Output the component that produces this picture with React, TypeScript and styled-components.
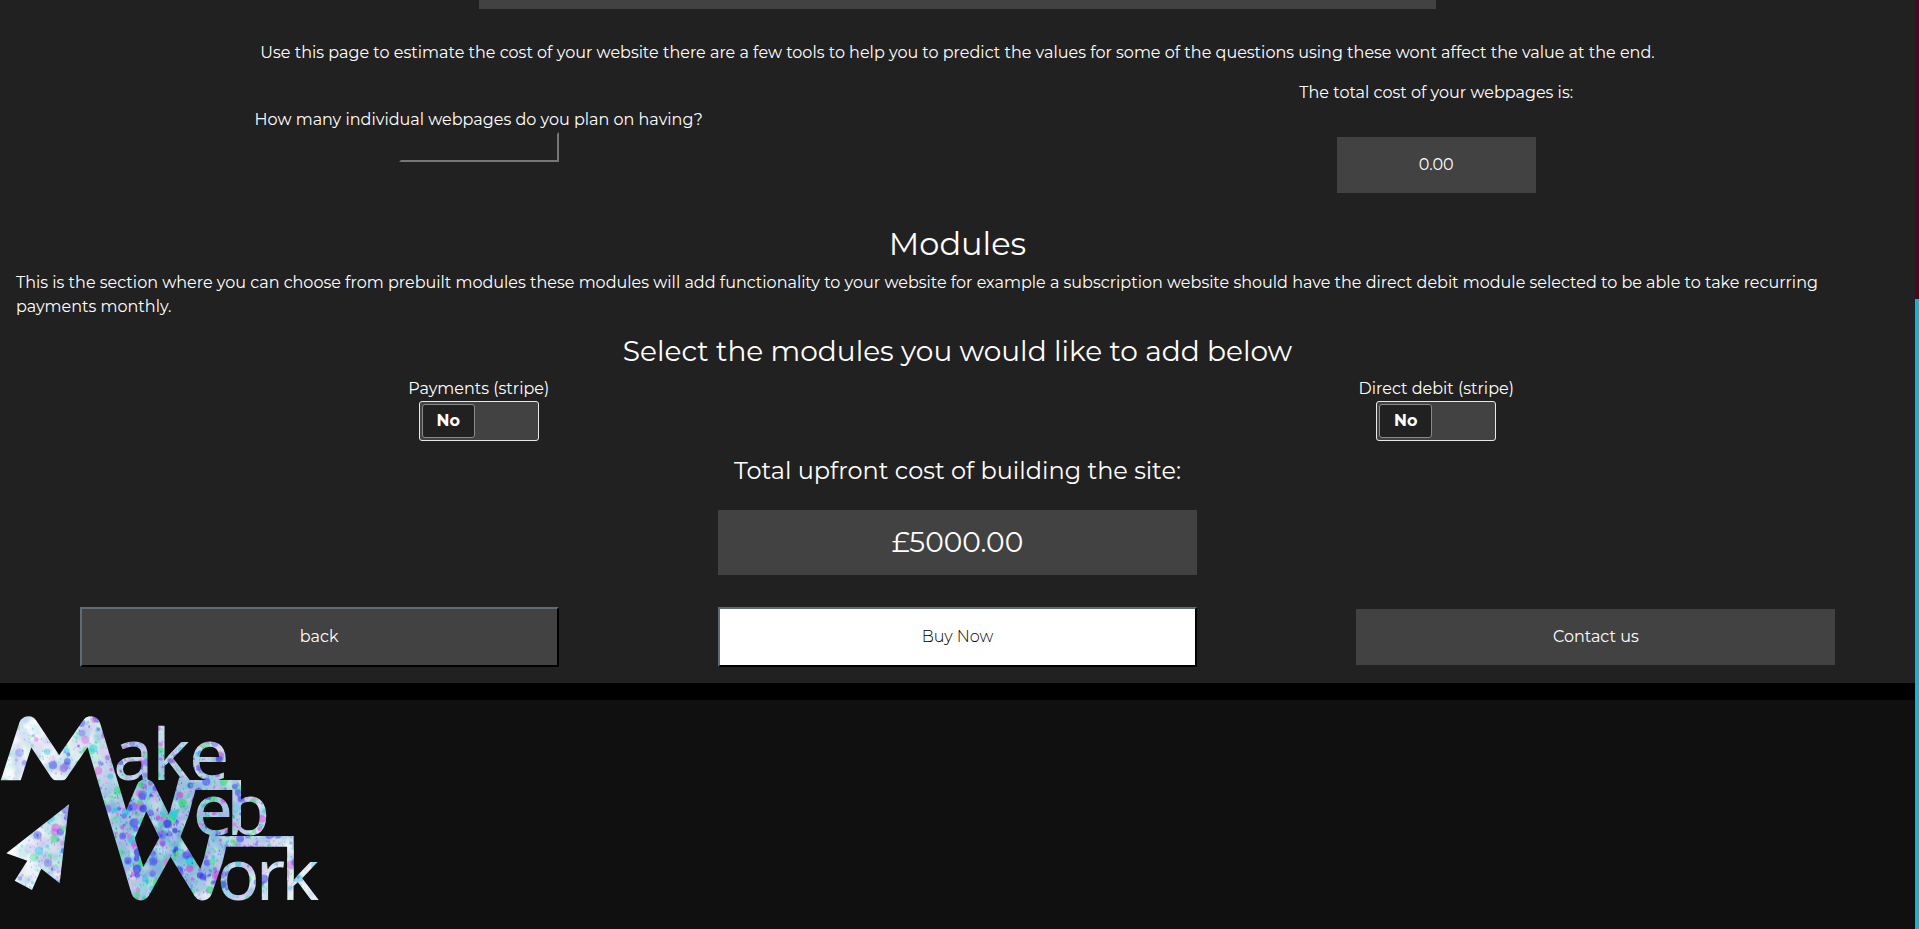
import React from 'react';
import styled, { createGlobalStyle } from 'styled-components';

const GlobalStyle = createGlobalStyle`
  * { box-sizing: border-box; }
  html, body { margin: 0; height: 100%; overflow: hidden; background: #101010; }
  body {
    font-family: Montserrat, Inter, "Liberation Sans", sans-serif;
    font-size: 16px;
    line-height: 24px;
    color: #fff;
  }
  button, input { font: inherit; color: inherit; }
`;

const Page = styled.div`
  display: flex;
  width: 100vw;
  height: 100vh;
`;

const Content = styled.div`
  flex: 1;
  min-width: 0;
  display: flex;
  flex-direction: column;
`;

const ScrollTrack = styled.div`
  width: 4px;
  background: #00bcd4;
`;

const ScrollThumb = styled.div`
  height: 299px;
  background: #470622;
`;

const Estimator = styled.main`
  height: 683px;
  background: #212121;
  display: flex;
  flex-direction: column;
  align-items: center;
`;

const TitleBar = styled.div`
  width: 50%;
  height: 9px;
  background: #424242;
`;

const Text = styled.p`
  margin: 0;
`;

const Intro = styled(Text)`
  margin-top: 32px;
`;

const Split = styled.section`
  width: 100%;
  height: 143.6px;
  margin-top: 16px;
  display: grid;
  grid-template-columns: 1fr 1fr;
`;

const Cell = styled.div<{ $top?: number }>`
  display: flex;
  flex-direction: column;
  align-items: center;
  padding-top: ${p => p.$top ?? 0}px;
`;

const PageCount = styled.input`
  width: 160px;
  height: 30px;
  border: 2px solid;
  border-color: #212121 #767676 #767676 #212121;
  background: transparent;
  outline: none;
`;

const PageCost = styled.div`
  width: 199px;
  height: 56px;
  margin-top: 32px;
  background: #424242;
  display: flex;
  align-items: center;
  justify-content: center;
`;

const Heading = styled.h2<{ $size: number }>`
  margin: 0;
  font-size: ${p => p.$size}px;
  font-weight: 400;
  line-height: 1.2;
`;

const Description = styled(Text)`
  width: 100%;
  padding: 0 16px;
  margin: 8px 0 16px;
`;

const Modules = styled.section`
  width: 100%;
  height: 72px;
  margin: 8px 0;
  display: grid;
  grid-template-columns: 1fr 1fr;
`;

const Toggle = styled.button`
  width: 120px;
  height: 40px;
  padding: 2px;
  border: 1px solid #e8e8e8;
  border-radius: 3px;
  background: #424242;
  display: flex;
`;

const Knob = styled.span`
  width: 53px;
  height: 34px;
  border: 1px solid #8a8a8a;
  border-radius: 3px;
  background: #212121;
  font-weight: 700;
  line-height: 32px;
  text-align: center;
`;

const Total = styled.div`
  width: 25%;
  height: 65px;
  margin: 24.6px 0 32px;
  background: #424242;
  display: flex;
  align-items: center;
  justify-content: center;
  font-size: 28px;
`;

const Actions = styled.nav`
  width: 100%;
  display: grid;
  grid-template-columns: repeat(3, 1fr);
  justify-items: center;
  align-items: center;
`;

const Action = styled.button<{ $kind: 'raised' | 'primary' | 'flat' }>`
  width: 75%;
  height: ${p => (p.$kind === 'flat' ? 56 : 60)}px;
  padding: 0;
  border-style: solid;
  border-width: ${p => (p.$kind === 'flat' ? 0 : 2)}px;
  border-color: #5f6b75 #000 #000 #5f6b75;
  background: ${p => (p.$kind === 'primary' ? '#fff' : '#424242')};
  color: ${p => (p.$kind === 'primary' ? '#000' : '#fff')};
  font-weight: ${p => (p.$kind === 'primary' ? 300 : 400)};
  text-align: center;
`;

const Footer = styled.footer`
  flex: 1;
  border-top: 17px solid #000;
  background: #101010;
`;

const LogoSvg = styled.svg`
  display: block;
  width: 340px;
  height: 228px;
`;

type Dot = { x: number; y: number; r: number; c: string; o: number };

function scatter(): { clouds: Dot[]; dots: Dot[] } {
  let seed = 7331;
  const next = () => {
    seed = (seed * 1664525 + 1013904223) % 4294967296;
    return seed / 4294967296;
  };
  const hues = ['#2fe070', '#4a50f0', '#d04ae0', '#22cdea', '#6f6bea', '#48e08c', '#3038e8', '#e070e0'];
  const tints = ['#f4faf8', '#b9a8ec', '#7fd4e4', '#b9f2d0', '#dcbcee', '#6ca8dc'];
  const clouds: Dot[] = [];
  const dots: Dot[] = [];
  for (let i = 0; i < 1300; i += 1) {
    clouds.push({ x: next() * 1000, y: 90 + next() * 590, r: 6 + next() * 14, c: tints[Math.floor(next() * 6)], o: 0.5 });
  }
  for (let i = 0; i < 6200; i += 1) {
    const x = next() * 1000;
    const y = 90 + next() * 590;
    const size = next();
    const distance = Math.hypot((x - 500) / 330, (y - 450) / 300);
    const density = Math.max(0.26, 1.2 - distance * 0.55);
    const c = hues[Math.floor(next() * hues.length)];
    if (next() < density) {
      dots.push({ x, y, r: 2 + size ** 8 * 12, c, o: Math.min(0.75, 0.2 + density * 0.5) });
    }
  }
  return { clouds, dots };
}

const { clouds, dots } = scatter();

function Logo() {
  return (
    <LogoSvg viewBox="0 60 1020 684" role="img" aria-label="Make Web Work">
      <defs>
        <radialGradient id="base" gradientUnits="userSpaceOnUse" cx="500" cy="460" r="480">
          <stop offset="0" stopColor="#50b4c4" />
          <stop offset="0.45" stopColor="#b0c8e4" />
          <stop offset="1" stopColor="#f2f6fa" />
        </radialGradient>
        <radialGradient id="haze" gradientUnits="userSpaceOnUse" cx="500" cy="460" r="500">
          <stop offset="0" stopColor="#fff" stopOpacity="0" />
          <stop offset="0.45" stopColor="#fff" stopOpacity="0.04" />
          <stop offset="1" stopColor="#fff" stopOpacity="0.45" />
        </radialGradient>
        <filter id="soften" x="0" y="0" width="1" height="1">
          <feGaussianBlur stdDeviation="4" />
        </filter>
        <pattern id="paint" patternUnits="userSpaceOnUse" width="1020" height="760">
          <rect width="1020" height="760" fill="url(#base)" />
          <g filter="url(#soften)">
            {clouds.map((d, i) => (
              <circle key={i} cx={d.x} cy={d.y} r={d.r} fill={d.c} opacity={d.o} />
            ))}
          </g>
          <rect width="1020" height="760" fill="url(#haze)" />
          {dots.map((d, i) => (
            <circle key={i} cx={d.x} cy={d.y} r={d.r} fill={d.c} opacity={d.o} />
          ))}
        </pattern>
        <clipPath id="trim">
          <path d="M0 60H345V301H0ZM260 60H1020V301H260ZM260 300H1020V744H260Z" />
        </clipPath>
      </defs>
      <g fill="none" stroke="url(#paint)" strokeWidth="57" strokeLinejoin="round" clipPath="url(#trim)">
        <path d="M18 345L85 137L177 276L273 137L422 633L508 478L538 400L565 300" />
        <path d="M372 478L437 326L508 470L608 633L640 540L657 469" />
      </g>
      <g fill="url(#paint)">
        <path d="M538 300H723V440H705V330H535Z" />
        <path d="M632 468H881V600H862V500H628Z" />
        <path d="M207 373L179 610L124 566L96 630L44 602L82 542L19 520Z" />
      </g>
      <g fill="url(#paint)" fontFamily="'Noto Sans', 'Open Sans', sans-serif" fontSize="214">
        <text x="340" y="299" textLength="348" lengthAdjust="spacing">ake</text>
        <text x="578" y="465" textLength="232" lengthAdjust="spacing">eb</text>
        <text x="650" y="660" textLength="308" lengthAdjust="spacing">ork</text>
      </g>
    </LogoSvg>
  );
}

export default function App() {
  return (
    <>
      <GlobalStyle />
      <Page>
        <Content>
          <Estimator>
            <TitleBar />
            <Intro>
              Use this page to estimate the cost of your website there are a few tools to help you to predict the values
              for some of the questions using these wont affect the value at the end.
            </Intro>
            <Split>
              <Cell $top={27}>
                <Text>How many individual webpages do you plan on having?</Text>
                <PageCount aria-label="Number of webpages" />
              </Cell>
              <Cell>
                <Text>The total cost of your webpages is:</Text>
                <PageCost>0.00</PageCost>
              </Cell>
            </Split>
            <Heading $size={32}>Modules</Heading>
            <Description>
              This is the section where you can choose from prebuilt modules these modules will add functionality to
              your website for example a subscription website should have the direct debit module selected to be able
              to take recurring payments monthly.
            </Description>
            <Heading $size={28}>Select the modules you would like to add below</Heading>
            <Modules>
              <Cell>
                <Text>Payments (stripe)</Text>
                <Toggle><Knob>No</Knob></Toggle>
              </Cell>
              <Cell>
                <Text>Direct debit (stripe)</Text>
                <Toggle><Knob>No</Knob></Toggle>
              </Cell>
            </Modules>
            <Heading as="h4" $size={24}>Total upfront cost of building the site:</Heading>
            <Total>£5000.00</Total>
            <Actions>
              <Action $kind="raised">back</Action>
              <Action $kind="primary">Buy Now</Action>
              <Action $kind="flat">Contact us</Action>
            </Actions>
          </Estimator>
          <Footer>
            <Logo />
          </Footer>
        </Content>
        <ScrollTrack>
          <ScrollThumb />
        </ScrollTrack>
      </Page>
    </>
  );
}
